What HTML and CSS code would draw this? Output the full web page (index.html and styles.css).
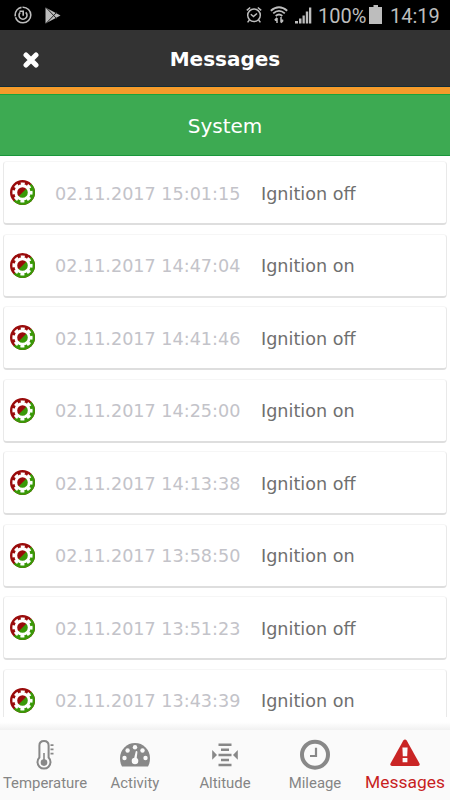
FILE: index.html
```html
<!DOCTYPE html>
<html lang="en">
<head>
<meta charset="utf-8">
<title>Messages</title>
<link rel="stylesheet" href="styles.css">
</head>
<body>
<svg class="defs" width="0" height="0" aria-hidden="true">
  <defs>
    <clipPath id="disc"><circle cx="13" cy="13" r="13"/></clipPath>
    <symbol id="gear" viewBox="0 0 26 26">
      <g clip-path="url(#disc)">
        <rect width="26" height="26" fill="#990b0b"/>
        <path d="M26 0V26H0Z" fill="#399908"/>
      </g>
      <circle cx="13" cy="13" r="9.100" fill="none" stroke="#fff" stroke-width="2.800" stroke-dasharray="4.100 3.047" stroke-dashoffset="2.050"/>
      <circle cx="13" cy="13" r="7" fill="none" stroke="#fff" stroke-width="3"/>
    </symbol>
  </defs>
</svg>
<div class="app">
  <div class="status">
    <svg class="s-power" width="18" height="18" viewBox="0 0 18 18" fill="none" stroke="#bdbdbd">
      <circle cx="9" cy="9" r="7.8" stroke-width="1.6" stroke-dasharray="22 1 12 1"/>
      <path d="M6.300 6.300A4 4 0 1 0 11.700 6.300M5.500 5.200H9.200V9.700" stroke-width="1.600"/>
    </svg>
    <svg class="s-play" width="16" height="17" viewBox="0 0 16 17">
      <path d="M.5 .5L15.5 8.5L.5 16.5Z" fill="#bdbdbd"/>
      <path d="M1 .5L12 12M1 16.5L12 5" stroke="#222" stroke-width="1"/>
    </svg>
    <svg class="s-alarm" width="16" height="18" viewBox="0 0 16 18" fill="none" stroke="#bdbdbd" stroke-width="1.5">
      <circle cx="8" cy="9.3" r="6.3"/>
      <path d="M4.8 8.2L7.5 10.5L11 7.5M.8 4.4L4.2 1.5M15.2 4.4L11.8 1.5M3.4 14L1.6 16.4M12.6 14L14.4 16.4"/>
    </svg>
    <svg class="s-wifi" width="18" height="18" viewBox="0 0 18 18" fill="none" stroke="#bdbdbd" stroke-width="1.8">
      <path d="M.8 4.7Q9-2.3 17.2 4.7M3.2 7.4Q9 2.4 14.8 7.4M5.7 10Q9 7 12.3 10"/>
      <path d="M7 17V12M4.8 14.2L7 11.7M11 11V16.5M13.2 14.2L11 16.8M4.8 14.2H7M11 14.2H13.2" stroke-width="1.5"/>
    </svg>
    <svg class="s-signal" width="17" height="17" viewBox="0 0 17 17" fill="#bdbdbd">
      <path d="M0 14H3V16.500H0ZM4 11.500H6.500V16.500H4ZM7.500 8.500H9.800V16.500H7.500ZM10.800 4.500H13.200V16.500H10.800ZM14 .5H16.300V16.500H14Z"/>
    </svg>
    <span class="s-pct">100%</span>
    <svg class="s-batt" width="13" height="19" viewBox="0 0 13 19" fill="#bdbdbd"><path d="M4.500 0H9V2H13V19H0V2H4.500Z"/></svg>
    <span class="s-time">14:19</span>
  </div>
  <header class="header">
    <svg class="close" width="16" height="16" viewBox="0 0 16 16"><path d="M3 3L13 13M13 3L3 13" stroke="#fff" stroke-width="5" stroke-linecap="round"/></svg>
    <h1 class="title">Messages</h1>
  </header>
  <div class="section">System</div>
  <main class="list">
    <div class="card"><svg class="gear"><use href="#gear"/></svg><span class="date">02.11.2017 15:01:15</span><span class="msg">Ignition off</span></div>
    <div class="card"><svg class="gear"><use href="#gear"/></svg><span class="date">02.11.2017 14:47:04</span><span class="msg">Ignition on</span></div>
    <div class="card"><svg class="gear"><use href="#gear"/></svg><span class="date">02.11.2017 14:41:46</span><span class="msg">Ignition off</span></div>
    <div class="card"><svg class="gear"><use href="#gear"/></svg><span class="date">02.11.2017 14:25:00</span><span class="msg">Ignition on</span></div>
    <div class="card"><svg class="gear"><use href="#gear"/></svg><span class="date">02.11.2017 14:13:38</span><span class="msg">Ignition off</span></div>
    <div class="card"><svg class="gear"><use href="#gear"/></svg><span class="date">02.11.2017 13:58:50</span><span class="msg">Ignition on</span></div>
    <div class="card"><svg class="gear"><use href="#gear"/></svg><span class="date">02.11.2017 13:51:23</span><span class="msg">Ignition off</span></div>
    <div class="card"><svg class="gear"><use href="#gear"/></svg><span class="date">02.11.2017 13:43:39</span><span class="msg">Ignition on</span></div>
  </main>
  <div class="fade"></div>
  <nav class="tabs">
    <div class="tab">
      <svg width="32" height="32" viewBox="0 0 32 32" fill="none" stroke="#888">
        <path d="M10.400 18.500V6.500Q10.400 2 15 2Q19.600 2 19.600 6.500V18.500A6.500 6.500 0 1 1 10.400 18.500Z" stroke-width="2"/>
        <path d="M15 14V22" stroke-width="1.600"/><circle cx="15" cy="23.600" r="3.300" fill="#888" stroke="none"/>
        <path d="M21.500 6.200H24.500M21.500 10.300H24.500M21.500 14.700H24.500" stroke-width="1.700"/>
      </svg>
      <span>Temperature</span>
    </div>
    <div class="tab">
      <svg width="32" height="32" viewBox="0 0 32 32">
        <path d="M3 27.500Q1 24.500 1 19A15 15 0 0 1 31 19Q31 24.500 29 27.500Z" fill="#888"/>
        <g fill="#fafafa"><circle cx="5.500" cy="19" r="2.200"/><circle cx="8.600" cy="11.500" r="2.200"/><circle cx="16" cy="8.300" r="2.200"/><circle cx="23.500" cy="11.500" r="2.200"/><circle cx="26.500" cy="19" r="2.200"/><circle cx="16" cy="22" r="3.300"/><path d="M14.700 21L16.800 12.200Q18.300 11.700 18.400 13L17.500 21Z"/></g>
      </svg>
      <span>Activity</span>
    </div>
    <div class="tab">
      <svg width="32" height="32" viewBox="0 0 32 32" fill="#888">
        <path d="M9.500 4.500H22.500V7H9.500ZM12 9.500H20V12H12ZM9.500 14.700H22.500V17.200H9.500ZM12 19.700H20V22.200H12ZM9.500 24.700H22.500V27.200H9.500ZM3.200 11L8 15.900L3.200 20.800ZM28.800 11L24 15.900L28.800 20.800Z"/>
      </svg>
      <span>Altitude</span>
    </div>
    <div class="tab">
      <svg width="32" height="32" viewBox="0 0 32 32" fill="none" stroke="#888">
        <circle cx="16" cy="15.700" r="13" stroke-width="4"/><path d="M17 8.700V17H11" stroke-width="2.200"/>
      </svg>
      <span>Mileage</span>
    </div>
    <div class="tab active">
      <svg width="32" height="32" viewBox="0 0 32 32">
        <path d="M14.300 2.500Q16 .3 17.700 2.500L30.500 25.500Q31.200 27.900 29 28H3Q.8 27.900 1.500 25.500Z" fill="#c92525"/>
        <path d="M13.400 9.500H18.600L18.200 18.200H13.800ZM13.600 20H18.400V24.200H13.600Z" fill="#fafafa"/>
      </svg>
      <span>Messages</span>
    </div>
  </nav>
</div>
</body>
</html>
```
FILE: styles.css
```css
* { box-sizing: border-box; }
body { margin: 0; background: #fff; }
.defs { display: block; }
.app {
  width: 450px;
  height: 800px;
  overflow: hidden;
  display: flex;
  flex-direction: column;
  font-family: "DejaVu Sans", sans-serif;
}
.status {
  height: 30px;
  flex: none;
  display: flex;
  align-items: center;
  background: #000;
  color: #bdbdbd;
  font: 20px/30px Roboto, sans-serif;
}
.status > * { flex: none; }
.s-power { margin-left: 14px; }
.s-play { margin-left: 13px; }
.s-alarm { margin-left: 185px; }
.s-wifi { margin-left: 8px; }
.s-signal { margin: 1px 0 0 7px; }
.s-pct { width: 51px; margin: 1px 0 0 6px; }
.s-batt { margin: 0 0 1px 0; }
.s-time { margin: 1px 0 0 8px; }
.header {
  height: 64px;
  flex: none;
  display: flex;
  align-items: center;
  background: #333;
  border-bottom: 7px solid #f59b2b;
  box-shadow: inset 0 -1px #102d3a;
}
.close { flex: none; margin: 2px 0 0 23px; }
.title {
  flex: 1;
  margin: 0 39px 0 0;
  text-align: center;
  font-size: 20px;
  font-weight: bold;
  line-height: 24px;
  color: #fff;
}
.section {
  height: 62px;
  flex: none;
  background: #3daa52;
  border-top: 1px solid #19a33e;
  border-bottom: 1px solid #19963a;
  color: #fff;
  font-size: 20px;
  line-height: 62px;
  text-align: center;
}
.list {
  height: 561px;
  flex: none;
  overflow: hidden;
  display: flex;
  flex-direction: column;
  gap: 8.5px;
  padding: 5px 3px 0;
}
.card {
  height: 64px;
  flex: none;
  display: flex;
  align-items: center;
  background: #fff;
  border: 1px solid #e9e9e9;
  border-top-color: #f6f6f6;
  border-bottom: 2px solid #dedede;
  border-radius: 4px;
  padding-left: 6px;
  font-size: 17.600px;
}
.gear { width: 25px; height: 25px; flex: none; }
.date { width: 206px; margin-left: 20px; color: #c3c3c9; white-space: nowrap; flex: none; }
.msg { color: #6f6f6f; white-space: nowrap; }
.date, .msg { padding-top: 2px; }
.fade { height: 13px; flex: none; background: linear-gradient(#fff 40%, #f1f1f1); }
.tabs {
  height: 70px;
  flex: none;
  display: grid;
  grid-template-columns: repeat(5, 1fr);
  background: #fafafa;
  color: #858585;
  font: 14.900px/20px Roboto, sans-serif;
}
.tab {
  display: flex;
  flex-direction: column;
  align-items: center;
  padding-top: 9px;
}
.tab span { margin-top: 2px; white-space: nowrap; }
.active { color: #c81e1e; font-size: 17.400px; padding-top: 8px; }
```
